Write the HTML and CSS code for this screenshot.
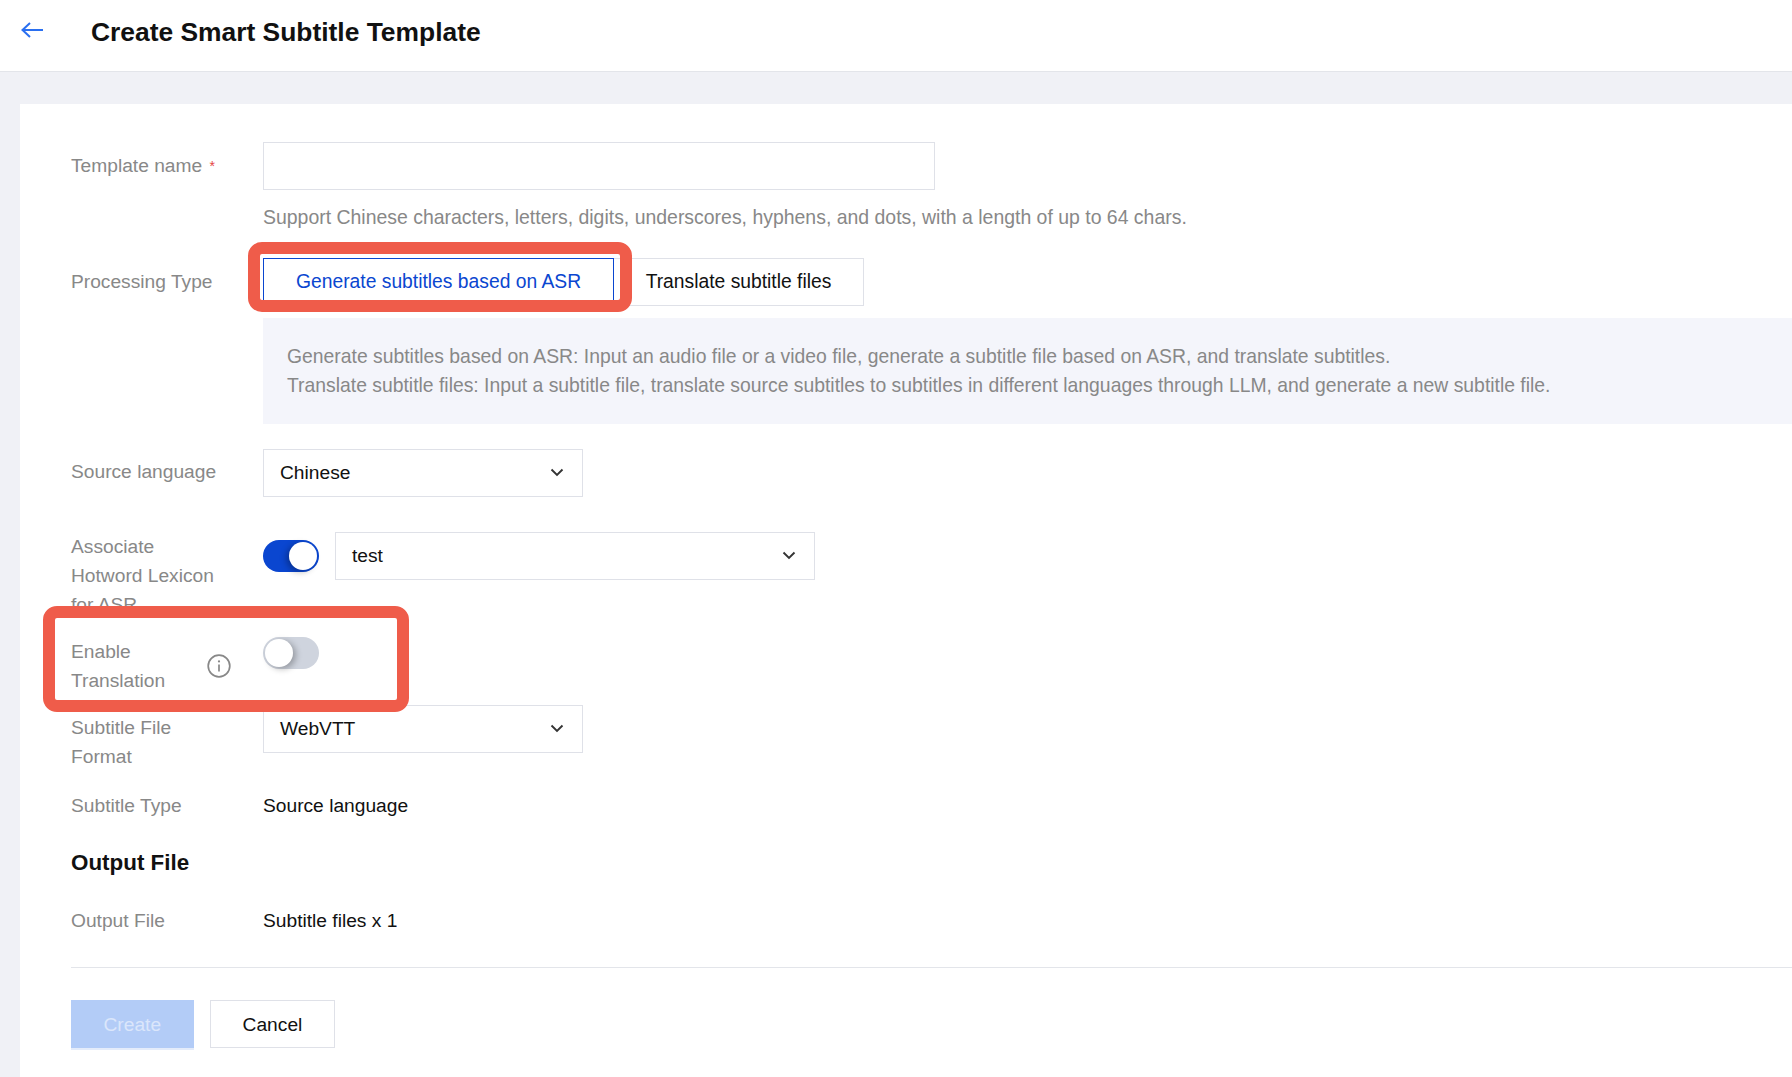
FILE: index.html
```html
<!DOCTYPE html>
<html lang="en">
<head>
<meta charset="utf-8">
<title>Create Smart Subtitle Template</title>
<link rel="stylesheet" href="styles.css">
</head>
<body>
<header class="topbar">
  <svg class="back" viewBox="0 0 22 16" width="22" height="16"><path d="M22 8H1.5M9 1 1.5 8 9 15" fill="none" stroke="#2a6ff0" stroke-width="2"/></svg>
  <h1 class="title">Create Smart Subtitle Template</h1>
</header>
<main class="content">
  <section class="card">
    <div class="row row-name">
      <div class="label">Template name <span class="req">*</span></div>
      <div class="control">
        <div class="input"></div>
        <p class="help">Support Chinese characters, letters, digits, underscores, hyphens, and dots, with a length of up to 64 chars.</p>
      </div>
    </div>
    <div class="row row-type">
      <div class="label label-center">Processing Type</div>
      <div class="control control-wide">
        <div class="segment">
          <div class="seg seg-on">Generate subtitles based on ASR</div>
          <div class="seg">Translate subtitle files</div>
        </div>
        <div class="note">
          <p>Generate subtitles based on ASR: Input an audio file or a video file, generate a subtitle file based on ASR, and translate subtitles.</p>
          <p>Translate subtitle files: Input a subtitle file, translate source subtitles to subtitles in different languages through LLM, and generate a new subtitle file.</p>
        </div>
      </div>
    </div>
    <div class="row row-source">
      <div class="label label-source">Source language</div>
      <div class="select">Chinese<svg class="chev" viewBox="0 0 14 9" width="14" height="9"><path d="M1.5 1.5 7 7l5.5-5.5" fill="none" stroke="#333" stroke-width="1.9"/></svg></div>
    </div>
    <div class="row row-lexicon">
      <div class="label">Associate Hotword Lexicon for ASR</div>
      <div class="inline">
        <span class="toggle toggle-on"></span>
        <div class="select select-wide">test<svg class="chev" viewBox="0 0 14 9" width="14" height="9"><path d="M1.5 1.5 7 7l5.5-5.5" fill="none" stroke="#333" stroke-width="1.9"/></svg></div>
      </div>
    </div>
    <div class="row row-translate">
      <div class="label label-info"><span class="label-text">Enable Translation</span>
        <svg class="info" viewBox="0 0 24 24" width="24" height="24"><circle cx="12" cy="12" r="10.8" fill="none" stroke="#888" stroke-width="1.7"/><path d="M12 10.5v7" stroke="#888" stroke-width="1.7"/><circle cx="12" cy="7.4" r="1.1" fill="#888"/></svg>
      </div>
      <span class="toggle"></span>
    </div>
    <div class="row row-format">
      <div class="label label-format">Subtitle File Format</div>
      <div class="select">WebVTT<svg class="chev" viewBox="0 0 14 9" width="14" height="9"><path d="M1.5 1.5 7 7l5.5-5.5" fill="none" stroke="#333" stroke-width="1.9"/></svg></div>
    </div>
    <div class="row">
      <div class="label">Subtitle Type</div>
      <div class="value">Source language</div>
    </div>
    <h2 class="section">Output File</h2>
    <div class="row row-output">
      <div class="label">Output File</div>
      <div class="value">Subtitle files x 1</div>
    </div>
    <div class="footer">
      <button class="btn btn-primary" type="button">Create</button>
      <button class="btn" type="button">Cancel</button>
    </div>
  </section>
</main>
<div class="mark mark-seg"></div>
<div class="mark mark-toggle"></div>
</body>
</html>
```
FILE: styles.css
```css
* { box-sizing: border-box; }
html, body { margin: 0; height: 100%; overflow: hidden; }
body {
  background: #f0f1f6;
  font-family: "Liberation Sans", Arial, sans-serif;
  font-size: 19.2px;
  line-height: 29px;
  color: #111;
  position: relative;
}
.topbar {
  height: 72px;
  background: #fff;
  border-bottom: 1px solid #e3e5ea;
  display: flex;
  align-items: flex-start;
  padding-left: 21px;
}
.back { margin-top: 22px; flex: none; }
.title {
  margin: 16px 0 0 48px;
  font-size: 26.4px;
  line-height: 32px;
  font-weight: 700;
  color: #111;
}
.content { padding: 32px 0 0 20px; }
.card {
  background: #fff;
  padding: 38px 0 0 51px;
  height: 1000px;
}
.row { display: flex; }
.label { width: 192px; padding-right: 40px; flex: none; color: #888; }
.label-center { padding-top: 9px; }
.label-source { padding-top: 8px; }
.req { color: #e54545; font-size: 14px; margin-left: 2px; vertical-align: 1px; }
.control { flex: none; }
.control-wide { flex: 1; }
.row-name .label { padding-top: 9px; padding-right: 0; }
.input { width: 672px; height: 48px; border: 1px solid #dfe1e8; }
.help { margin: 13px 0 0; color: #888; font-size: 19.45px; white-space: nowrap; }
.row-type { margin-top: 26px; }
.segment { display: flex; height: 48px; }
.seg {
  height: 48px;
  padding: 0 31.5px;
  border: 1px solid #dfe1e8;
  border-left: 0;
  display: flex;
  align-items: center;
  line-height: 1;
  font-size: 19.3px;
}
.seg-on { padding: 0 32px; border: 1px solid #0a46d0; color: #0a46d0; }
.note {
  margin-top: 12px;
  height: 106px;
  background: #f4f5fb;
  padding: 24px 0 0 24px;
  color: #888;
  font-size: 19.35px;
}
.note p { margin: 0; white-space: nowrap; }
.row-source { margin-top: 25px; }
.select {
  width: 320px;
  height: 48px;
  border: 1px solid #dfe1e8;
  padding: 0 18px 2px 16px;
  display: flex;
  align-items: center;
  justify-content: space-between;
  color: #111;
}
.select-wide { width: 480px; }
.row-lexicon { margin-top: 35px; height: 105px; }
.inline { display: flex; gap: 16px; }
.toggle {
  position: relative;
  flex: none;
  width: 56px;
  height: 32px;
  border-radius: 16px;
  background: #cfd4de;
  margin-top: 8px;
}
.toggle::after {
  content: "";
  position: absolute;
  left: 2px;
  top: 2px;
  width: 28px;
  height: 28px;
  border-radius: 50%;
  background: #fff;
  box-shadow: 3px 2px 6px rgba(0, 0, 0, .28);
}
.toggle-on { background: #0a46d0; }
.toggle-on::after { left: 26px; box-shadow: -3px 2px 6px rgba(0, 0, 0, .28); }
.row-translate { height: 68px; }
.row-translate .toggle { margin-top: 0; }
.label-info {
  display: flex;
  align-items: center;
  justify-content: space-between;
  padding-right: 32px;
  height: 58px;
}
.label-text { width: 110px; }
.row-format { height: 86px; }
.label-format { padding-top: 8px; }
.value { color: #111; }
.section {
  margin: 0;
  font-size: 22.4px;
  line-height: 32px;
  font-weight: 700;
  color: #111;
  padding-top: 27px;
  box-sizing: content-box;
}
.row-output { margin-top: 27px; }
.footer {
  margin-top: 32px;
  border-top: 1px solid #e3e5ea;
  padding-top: 32px;
  display: flex;
  gap: 16px;
}
.btn {
  font: inherit;
  height: 48px;
  padding: 0 32px;
  background: #fff;
  border: 1px solid #dfe1e8;
  color: #111;
}
.btn-primary {
  padding: 0 31.5px;
  background: #b3ccf7;
  border-color: #b3ccf7;
  color: #dbe6fb;
  box-shadow: 0 2px 0 #e4ecfb;
}
.mark {
  position: absolute;
  border: 12px solid #ef5c4a;
  border-radius: 14px;
}
.mark-seg { left: 248px; top: 242px; width: 384px; height: 70px; }
.mark-toggle { left: 43px; top: 606px; width: 366px; height: 106px; }
```
